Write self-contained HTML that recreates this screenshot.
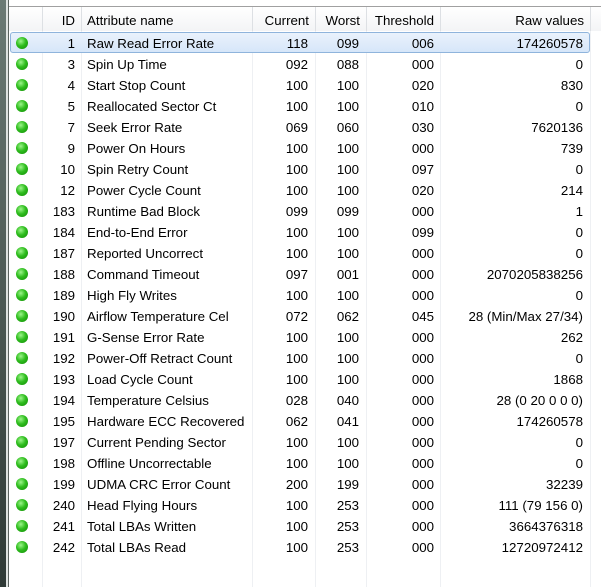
<!DOCTYPE html>
<html><head><style>
html,body{margin:0;width:601px;height:587px;overflow:hidden}
body{background:#fff;font-family:"Liberation Sans",sans-serif;font-size:13.3px;color:#000;position:relative}
.strip{position:absolute;left:0;top:0;width:6px;height:587px;background:linear-gradient(#6b7a74,#2f3a36)}
.strip2{position:absolute;left:6px;top:0;width:2px;height:587px;background:#dfe3e1}
.strip3{position:absolute;left:8px;top:0;width:1px;height:587px;background:#5c6460}
.topb{position:absolute;left:9px;top:6px;width:592px;height:1px;background:#a0a0a0}
.hdr{position:absolute;left:9px;top:7px;width:592px;height:24px;background:linear-gradient(#fff,#f3f4f6)}
.vl{position:absolute;top:31px;width:1px;height:556px;background:#eef0f3}
.hv{position:absolute;top:7px;width:1px;height:24px;background:#dde0e4}
.c{position:absolute;white-space:nowrap;line-height:21px}
.r{text-align:right}
.sel{position:absolute;left:10px;top:32px;width:578px;height:19px;border:1px solid #8fb4dc;border-radius:3px;background:linear-gradient(#eaf2fc,#d6e6f9)}
.dot{position:absolute;left:16px;width:12px;height:12px;border-radius:50%;background:radial-gradient(circle at 40% 35%,#9cf58a 0,#2fbd1e 45%,#108a05 100%)}
</style></head><body>
<div class="strip"></div><div class="strip2"></div><div class="strip3"></div>
<div class="topb"></div><div class="hdr"></div>
<div class="hv" style="left:42px"></div><div class="hv" style="left:81px"></div><div class="hv" style="left:252px"></div><div class="hv" style="left:315px"></div><div class="hv" style="left:366px"></div><div class="hv" style="left:440px"></div><div class="hv" style="left:590px"></div>
<div class="vl" style="left:42px"></div><div class="vl" style="left:81px"></div><div class="vl" style="left:252px"></div><div class="vl" style="left:315px"></div><div class="vl" style="left:366px"></div><div class="vl" style="left:440px"></div><div class="vl" style="left:590px"></div>
<div class="c r" style="top:10px;left:42px;width:33px">ID</div>
<div class="c" style="top:10px;left:87px">Attribute name</div>
<div class="c r" style="top:10px;left:252px;width:57px">Current</div>
<div class="c r" style="top:10px;left:315px;width:45px">Worst</div>
<div class="c r" style="top:10px;left:366px;width:68px">Threshold</div>
<div class="c r" style="top:10px;left:440px;width:144px">Raw values</div>
<div class="sel"></div>
<div id="rows"></div>
<script>
var d=[["1","Raw Read Error Rate","118","099","006","174260578"],["3","Spin Up Time","092","088","000","0"],["4","Start Stop Count","100","100","020","830"],["5","Reallocated Sector Ct","100","100","010","0"],["7","Seek Error Rate","069","060","030","7620136"],["9","Power On Hours","100","100","000","739"],["10","Spin Retry Count","100","100","097","0"],["12","Power Cycle Count","100","100","020","214"],["183","Runtime Bad Block","099","099","000","1"],["184","End-to-End Error","100","100","099","0"],["187","Reported Uncorrect","100","100","000","0"],["188","Command Timeout","097","001","000","2070205838256"],["189","High Fly Writes","100","100","000","0"],["190","Airflow Temperature Cel","072","062","045","28 (Min/Max 27/34)"],["191","G-Sense Error Rate","100","100","000","262"],["192","Power-Off Retract Count","100","100","000","0"],["193","Load Cycle Count","100","100","000","1868"],["194","Temperature Celsius","028","040","000","28 (0 20 0 0 0)"],["195","Hardware ECC Recovered","062","041","000","174260578"],["197","Current Pending Sector","100","100","000","0"],["198","Offline Uncorrectable","100","100","000","0"],["199","UDMA CRC Error Count","200","199","000","32239"],["240","Head Flying Hours","100","253","000","111 (79 156 0)"],["241","Total LBAs Written","100","253","000","3664376318"],["242","Total LBAs Read","100","253","000","12720972412"]];
var h="";d.forEach(function(r,i){var t=33+21*i;
h+='<div class="dot" style="top:'+(t+4)+'px"></div>';
h+='<div class="c r" style="top:'+t+'px;left:42px;width:33px">'+r[0]+'</div>';
h+='<div class="c" style="top:'+t+'px;left:87px">'+r[1]+'</div>';
h+='<div class="c r" style="top:'+t+'px;left:252px;width:56px">'+r[2]+'</div>';
h+='<div class="c r" style="top:'+t+'px;left:315px;width:44px">'+r[3]+'</div>';
h+='<div class="c r" style="top:'+t+'px;left:366px;width:68px">'+r[4]+'</div>';
h+='<div class="c r" style="top:'+t+'px;left:440px;width:143px">'+r[5]+'</div>';});
document.getElementById("rows").innerHTML=h;
</script>
</body></html>
